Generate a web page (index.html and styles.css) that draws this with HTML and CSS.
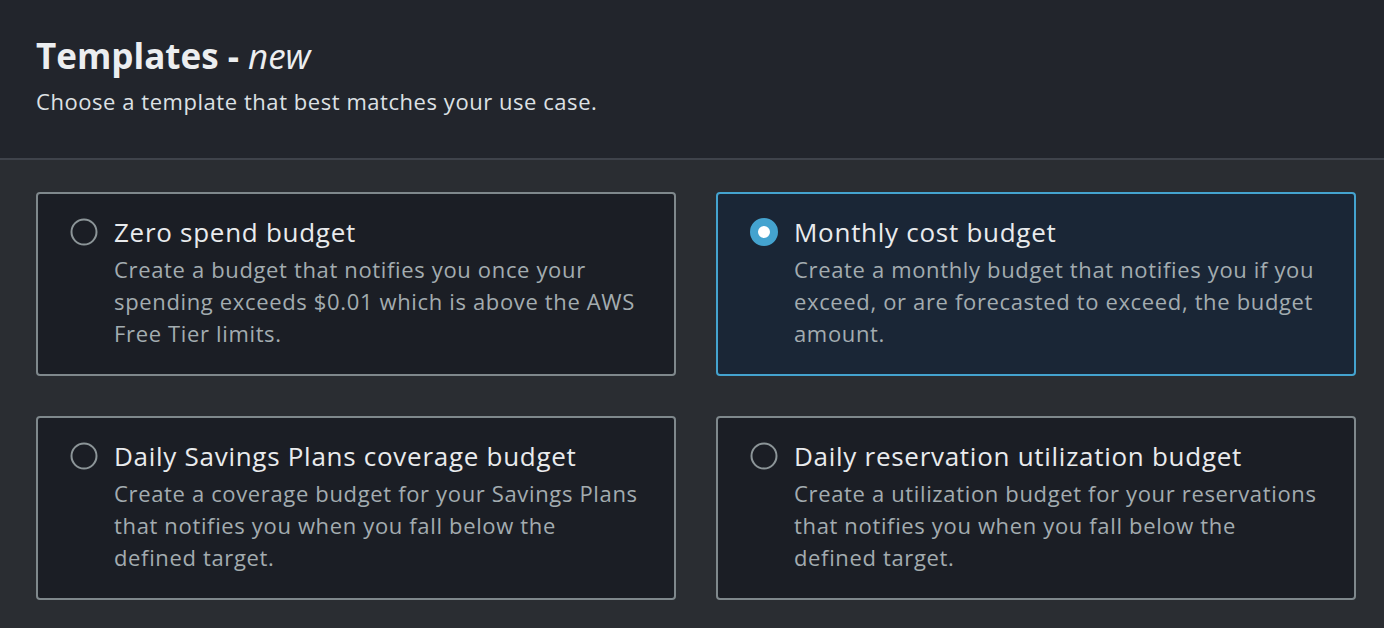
FILE: index.html
```html
<!DOCTYPE html>
<html lang="en">
<head>
<meta charset="utf-8">
<title>Templates</title>
<link rel="stylesheet" href="styles.css">
</head>
<body>
  <header class="header">
    <h2 class="heading">Templates - <em>new</em></h2>
    <p class="subheading">Choose a template that best matches your use case.</p>
  </header>
  <main class="content">
    <div class="tiles">
      <label class="tile">
        <svg class="radio" viewBox="0 0 28 28" width="28" height="28"><circle cx="14" cy="14" r="12.5" fill="none" stroke="#8c9598" stroke-width="2"/></svg>
        <div class="tile-text">
          <div class="tile-title">Zero spend budget</div>
          <div class="tile-desc">Create a budget that notifies you once your spending exceeds $0.01 which is above the AWS Free Tier limits.</div>
        </div>
      </label>
      <label class="tile tile-selected">
        <svg class="radio" viewBox="0 0 28 28" width="28" height="28"><circle cx="14" cy="14" r="10" fill="#ffffff" stroke="#44a3cf" stroke-width="8"/></svg>
        <div class="tile-text">
          <div class="tile-title">Monthly cost budget</div>
          <div class="tile-desc">Create a monthly budget that notifies you if you exceed, or are forecasted to exceed, the budget amount.</div>
        </div>
      </label>
      <label class="tile">
        <svg class="radio" viewBox="0 0 28 28" width="28" height="28"><circle cx="14" cy="14" r="12.5" fill="none" stroke="#8c9598" stroke-width="2"/></svg>
        <div class="tile-text">
          <div class="tile-title">Daily Savings Plans coverage budget</div>
          <div class="tile-desc">Create a coverage budget for your Savings Plans that notifies you when you fall below the defined target.</div>
        </div>
      </label>
      <label class="tile">
        <svg class="radio" viewBox="0 0 28 28" width="28" height="28"><circle cx="14" cy="14" r="12.5" fill="none" stroke="#8c9598" stroke-width="2"/></svg>
        <div class="tile-text">
          <div class="tile-title">Daily reservation utilization budget</div>
          <div class="tile-desc">Create a utilization budget for your reservations that notifies you when you fall below the defined target.</div>
        </div>
      </label>
    </div>
  </main>
</body>
</html>
```
FILE: styles.css
```css
html, body {
  margin: 0;
  padding: 0;
}
body {
  background: #2a2d32;
  font-family: "Open Sans", "Noto Sans", sans-serif;
  color: #e9ebed;
  height: 628px;
  overflow: hidden;
}
.header {
  background: #22252c;
  border-bottom: 2px solid #3f434b;
  height: 160px;
  box-sizing: border-box;
  padding: 34px 36px 0;
}
.heading {
  margin: 0;
  font-size: 35px;
  line-height: 44px;
  font-weight: 700;
  color: #eceef0;
}
.heading em {
  font-weight: 400;
  font-style: italic;
}
.subheading {
  margin: 8px 0 0;
  font-size: 22px;
  line-height: 30px;
  letter-spacing: 0.55px;
  color: #dde1e4;
}
.content {
  padding: 32px 28px 28px 36px;
}
.tiles {
  display: grid;
  grid-template-columns: 640px 640px;
  column-gap: 40px;
  row-gap: 40px;
}
.tile {
  display: flex;
  gap: 16px;
  align-items: flex-start;
  height: 184px;
  box-sizing: border-box;
  border: 2px solid #7f888c;
  border-radius: 4px;
  background: #1b1e25;
  padding: 22px 33px 0 32px;
  cursor: pointer;
}
.tile-selected {
  border-color: #44a3cf;
  background: #1a2636;
}
.radio {
  flex: none;
  margin-top: 2px;
}
.tile-title {
  font-size: 26px;
  line-height: 32px;
  letter-spacing: 0.72px;
  color: #e9ebed;
}
.tile-desc {
  margin-top: 5px;
  font-size: 22px;
  line-height: 32px;
  letter-spacing: 0.65px;
  color: #a3acb0;
}
```
